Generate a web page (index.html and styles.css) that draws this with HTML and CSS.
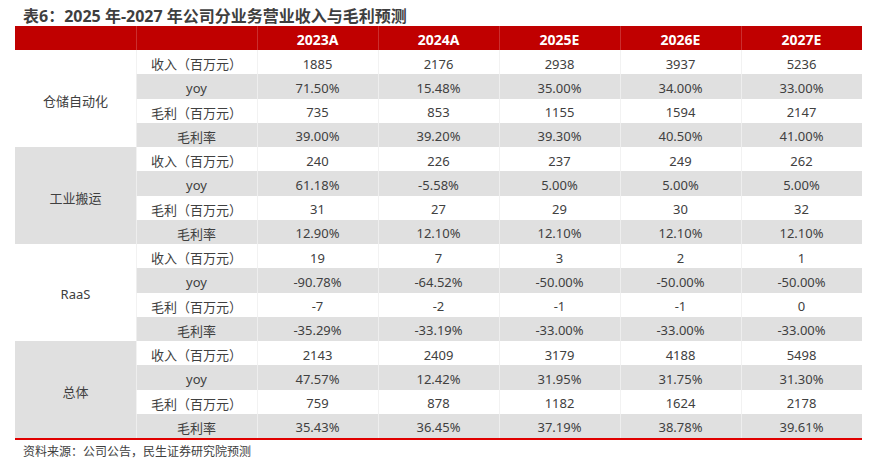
FILE: index.html
```html
<!DOCTYPE html>
<html lang="zh">
<head>
<meta charset="utf-8">
<title>表6</title>
<link rel="stylesheet" href="styles.css">
</head>
<body>
<div class="page">
  <h1 class="title">表6：2025 年-2027 年公司分业务营业收入与毛利预测</h1>
  <div class="table">
    <div class="hcell"></div>
    <div class="hcell"></div>
    <div class="hcell">2023A</div>
    <div class="hcell">2024A</div>
    <div class="hcell">2025E</div>
    <div class="hcell">2026E</div>
    <div class="hcell">2027E</div>

    <div class="group">仓储自动化</div>
    <div class="cell">收入（百万元）</div><div class="cell">1885</div><div class="cell">2176</div><div class="cell">2938</div><div class="cell">3937</div><div class="cell">5236</div>
    <div class="cell alt">yoy</div><div class="cell alt">71.50%</div><div class="cell alt">15.48%</div><div class="cell alt">35.00%</div><div class="cell alt">34.00%</div><div class="cell alt">33.00%</div>
    <div class="cell">毛利（百万元）</div><div class="cell">735</div><div class="cell">853</div><div class="cell">1155</div><div class="cell">1594</div><div class="cell">2147</div>
    <div class="cell alt">毛利率</div><div class="cell alt">39.00%</div><div class="cell alt">39.20%</div><div class="cell alt">39.30%</div><div class="cell alt">40.50%</div><div class="cell alt">41.00%</div>

    <div class="group alt">工业搬运</div>
    <div class="cell">收入（百万元）</div><div class="cell">240</div><div class="cell">226</div><div class="cell">237</div><div class="cell">249</div><div class="cell">262</div>
    <div class="cell alt">yoy</div><div class="cell alt">61.18%</div><div class="cell alt">-5.58%</div><div class="cell alt">5.00%</div><div class="cell alt">5.00%</div><div class="cell alt">5.00%</div>
    <div class="cell">毛利（百万元）</div><div class="cell">31</div><div class="cell">27</div><div class="cell">29</div><div class="cell">30</div><div class="cell">32</div>
    <div class="cell alt">毛利率</div><div class="cell alt">12.90%</div><div class="cell alt">12.10%</div><div class="cell alt">12.10%</div><div class="cell alt">12.10%</div><div class="cell alt">12.10%</div>

    <div class="group">RaaS</div>
    <div class="cell">收入（百万元）</div><div class="cell">19</div><div class="cell">7</div><div class="cell">3</div><div class="cell">2</div><div class="cell">1</div>
    <div class="cell alt">yoy</div><div class="cell alt">-90.78%</div><div class="cell alt">-64.52%</div><div class="cell alt">-50.00%</div><div class="cell alt">-50.00%</div><div class="cell alt">-50.00%</div>
    <div class="cell">毛利（百万元）</div><div class="cell">-7</div><div class="cell">-2</div><div class="cell">-1</div><div class="cell">-1</div><div class="cell">0</div>
    <div class="cell alt">毛利率</div><div class="cell alt">-35.29%</div><div class="cell alt">-33.19%</div><div class="cell alt">-33.00%</div><div class="cell alt">-33.00%</div><div class="cell alt">-33.00%</div>

    <div class="group alt">总体</div>
    <div class="cell">收入（百万元）</div><div class="cell">2143</div><div class="cell">2409</div><div class="cell">3179</div><div class="cell">4188</div><div class="cell">5498</div>
    <div class="cell alt">yoy</div><div class="cell alt">47.57%</div><div class="cell alt">12.42%</div><div class="cell alt">31.95%</div><div class="cell alt">31.75%</div><div class="cell alt">31.30%</div>
    <div class="cell">毛利（百万元）</div><div class="cell">759</div><div class="cell">878</div><div class="cell">1182</div><div class="cell">1624</div><div class="cell">2178</div>
    <div class="cell alt">毛利率</div><div class="cell alt">35.43%</div><div class="cell alt">36.45%</div><div class="cell alt">37.19%</div><div class="cell alt">38.78%</div><div class="cell alt">39.61%</div>
  </div>
  <p class="source">资料来源：公司公告，民生证券研究院预测</p>
</div>
</body>
</html>
```

FILE: styles.css
```css
html, body {
  margin: 0;
  padding: 0;
  background: #ffffff;
}

body {
  font-family: "Noto Sans", "Noto Sans CJK SC", sans-serif;
  color: #404040;
}

.page {
  width: 877px;
  height: 471px;
  overflow: hidden;
}

.title {
  margin: 0;
  padding: 6px 0 0 23px;
  height: 20px;
  line-height: 20px;
  font-size: 16px;
  font-weight: 700;
  color: #3f3f3f;
  white-space: nowrap;
}

.table {
  margin-left: 15px;
  width: 847px;
  display: grid;
  grid-template-columns: repeat(7, 121px);
  grid-template-rows: 24px;
  grid-auto-rows: 24.25px;
  border-bottom: 2px solid #e00000;
}

.hcell {
  background: #c00000;
  color: #ffffff;
  font-weight: 700;
  font-size: 14px;
  display: flex;
  align-items: center;
  justify-content: center;
  padding-top: 2px;
  box-sizing: border-box;
  box-shadow: inset 1px 0 0 rgba(255, 255, 255, 0.18);
}

.hcell:first-child {
  box-shadow: none;
}

.group {
  grid-column: 1;
  grid-row: span 4;
  display: flex;
  align-items: center;
  justify-content: center;
  font-size: 13px;
  padding-top: 3px;
  box-sizing: border-box;
}

.cell {
  display: flex;
  align-items: center;
  justify-content: center;
  font-size: 13px;
  white-space: nowrap;
  padding-top: 3px;
  box-sizing: border-box;
  background: #ffffff;
  box-shadow: inset 1px 0 0 rgba(230, 230, 230, 0.5);
}

.group.alt,
.cell.alt {
  background: #e0e0e0;
}

.cell.alt {
  box-shadow: inset 1px 0 0 rgba(255, 255, 255, 0.45);
}

.source {
  margin: 2px 0 0 23px;
  font-size: 12px;
  line-height: 20px;
  color: #404040;
}
```
